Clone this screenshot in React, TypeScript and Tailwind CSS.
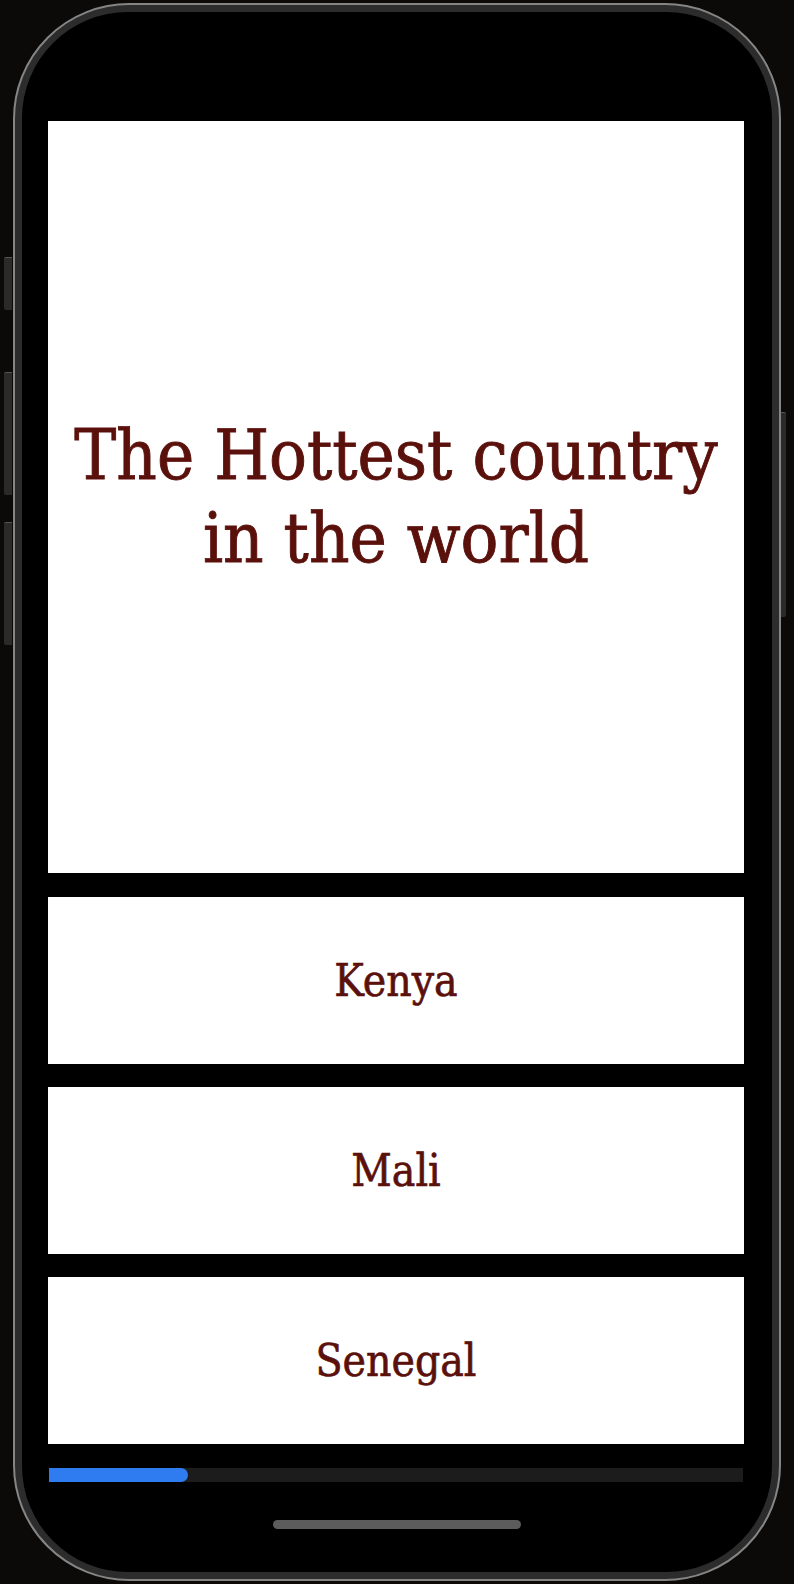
import React from "react";

const answers = ["Kenya", "Mali", "Senegal"];

export default function App() {
  const progress = 20;
  return (
    <div className="relative w-[794px] h-[1584px] bg-[#0b0a09] pt-[3px] pl-[13px] overflow-hidden">
      {/* side buttons */}
      <div className="absolute left-[4px] top-[257px] w-[8px] h-[53px] rounded-l-[2px] bg-[#2a2a2a] border-t border-[#555]" />
      <div className="absolute left-[4px] top-[372px] w-[8px] h-[123px] rounded-l-[2px] bg-[#2a2a2a] border-t border-[#555]" />
      <div className="absolute left-[4px] top-[522px] w-[8px] h-[123px] rounded-l-[2px] bg-[#2a2a2a] border-t border-[#555]" />
      <div className="absolute left-[781px] top-[412px] w-[5px] h-[205px] rounded-r-[2px] bg-[#2a2a2a] border-t border-[#555]" />

      {/* phone frame */}
      <div className="w-[768px] h-[1578px] rounded-[116px] border-2 border-[#858585] bg-[#2c2c2c] p-[7px]">
        <div
          className="flex flex-col h-full rounded-[106px] bg-black pt-[109px] pl-[26px] pr-[28px]"
          style={{ fontFamily: '"DejaVu Serif", serif' }}
        >
          {/* question */}
          <div className="flex items-center justify-center h-[752px] bg-white">
            <h1 className="text-center text-[70px] leading-[83px] text-[#5a100b] font-stretch-condensed [-webkit-text-stroke:0.9px_#5a100b]">
              The Hottest country
              <br />
              in the world
            </h1>
          </div>

          {/* answers */}
          <div className="flex flex-col gap-[23px] mt-[24px]">
            {answers.map((a) => (
              <div
                key={a}
                className="flex items-center justify-center h-[167px] bg-white"
              >
                <span className="text-[44px] text-[#5a100b] font-stretch-condensed [-webkit-text-stroke:0.6px_#5a100b]">
                  {a}
                </span>
              </div>
            ))}
          </div>

          {/* progress */}
          <div className="mt-[24px] h-[14px] bg-[#1c1c1c] mx-[1px]">
            <div
              className="h-full bg-[#2f7bf0] rounded-r-full"
              style={{ width: `${progress}%` }}
            />
          </div>

          {/* home indicator */}
          <div className="mt-[38px] self-center w-[248px] h-[9px] rounded-full bg-[#5c5c5c] ml-[2px]" />
        </div>
      </div>
    </div>
  );
}
